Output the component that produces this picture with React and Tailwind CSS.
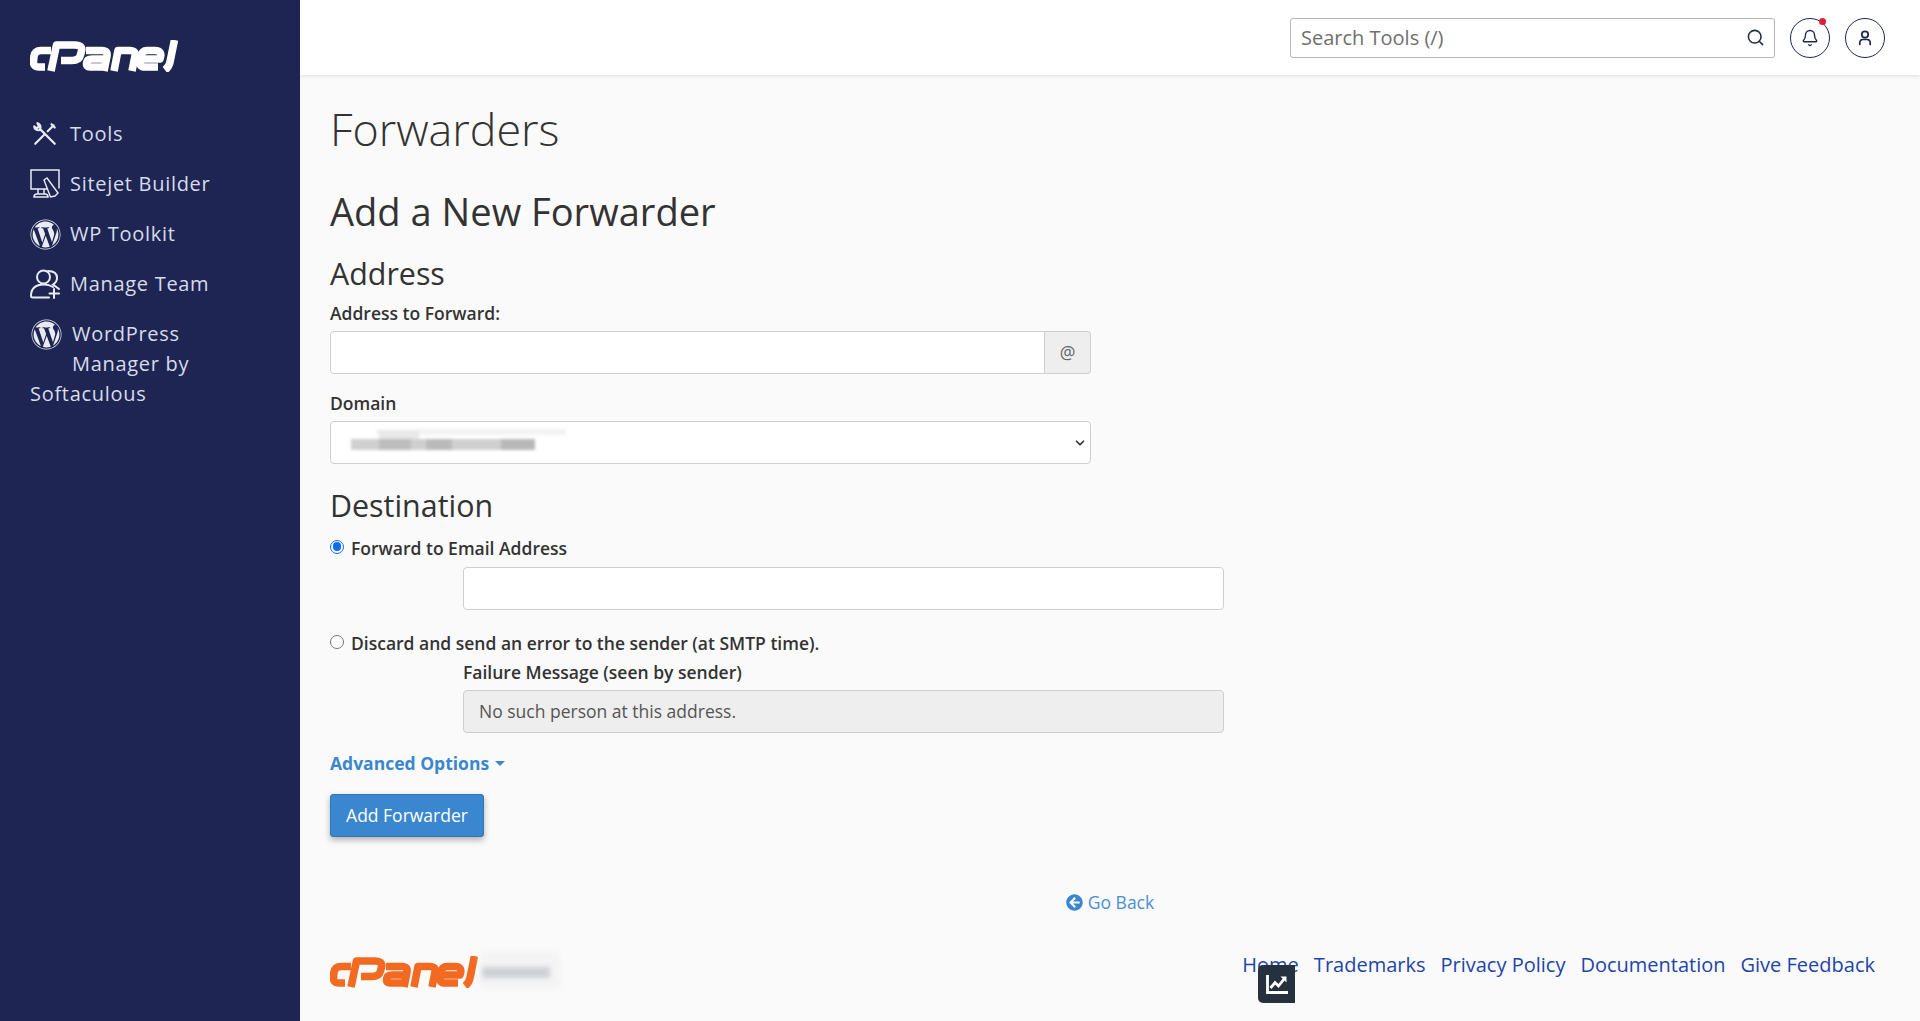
import React from "react";
import { Search, Bell, ChevronDown } from "lucide-react";
import { FaWordpress, FaArrowCircleLeft } from "react-icons/fa";

function Logo({ color, className }) {
  return (
    <svg viewBox="0 0 148 32" className={className} fill="none" stroke={color} strokeWidth="7.6" strokeLinecap="butt" strokeLinejoin="round">
      <path d="M21 10.5 H11 Q5 10.5 4 16 L3.5 21 Q3 27 9 27 H15" />
      <path d="M21 31 L26.5 5 H45 Q53 5 51.5 11 L50.5 15 Q49 20.5 42 20.5 H31" />
      <path d="M56 10.5 H72 Q78 10.5 77 16 L74 31 M76 19 H62 Q57 19 56.5 23 Q56 27 60 27 H74" />
      <path d="M84 31 L88 10.5 H100 Q106 10.5 105 16 L102 31" />
      <path d="M112 19 H130 Q133 10.5 125 10.5 H117 Q112 10.5 111 16 L110 21 Q109 27 115 27 H128" />
      <path d="M144.5 0 L140 22 Q139 27 135 30" />
    </svg>
  );
}

function ToolsIcon() {
  return (
    <svg viewBox="0 0 24 24" className="w-[26px] h-[26px] ml-[2px]" fill="none" stroke="#e8ebf3" strokeWidth="2" strokeLinecap="round" strokeLinejoin="round">
      <path d="M3 21 L11 13" />
      <path d="M14.5 9.5 L20 4 M18 3 L21 6" />
      <path d="M21 21 L7.5 7.5 Q8.5 4 6 2.5 L5 2 L6.5 5 L4.5 6.8 L2 5 Q2.5 8.5 6.5 8.5" />
    </svg>
  );
}

function SitejetIcon() {
  return (
    <svg viewBox="0 0 30 30" className="w-[30px] h-[30px]" fill="none" stroke="#e8ebf3" strokeWidth="1.5">
      <path d="M29 19.5 V1 H1 V20 H17" />
      <path d="M8 20 V25 M14 20 V25 M4 28 Q4 25 7 25 H15 Q18 25 18 28 Z" />
      <path d="M16 10 L19 8 L30 23 L27 26 L22.5 27 Z" strokeWidth="1.4" transform="translate(-2 1)" />
    </svg>
  );
}

function TeamIcon() {
  return (
    <svg viewBox="0 0 30 30" className="w-[30px] h-[30px]" fill="none" stroke="#e8ebf3" strokeWidth="2" strokeLinecap="round">
      <circle cx="13.5" cy="8" r="6.5" />
      <path d="M18 2 Q27 2 27 9 Q27 13 23 15.5 L29 20" />
      <path d="M23 18 Q19 15.5 14 15.5 Q1 15.5 1 27 Q1 28.5 3 28.5 H19" />
      <path d="M24 20 V29 M19.5 24.5 H29" />
    </svg>
  );
}

function NavItem({ icon, label }) {
  return (
    <div className="flex items-center h-[50px] pl-[30px]">
      <span className="w-[40px] flex items-center">{icon}</span>
      <span className="text-[20px] leading-[30px] tracking-[0.7px] text-[#d5dcea]">{label}</span>
    </div>
  );
}

function Input({ className = "", children }) {
  return <div className={"h-[43px] bg-white border border-[#cfcfcf] rounded-[4px] " + className}>{children}</div>;
}

export default function App() {
  return (
    <div className="flex w-full h-[1021px] overflow-hidden bg-[#fafafa] text-[#333] font-['Open_Sans',sans-serif]">
      <aside className="w-[300px] shrink-0 bg-[#1f2552]">
        <div className="pl-[30px] pt-[40px] h-[109px]">
          <Logo color="#ffffff" className="w-[148px] h-[32px]" />
        </div>
        <NavItem icon={<ToolsIcon />} label="Tools" />
        <NavItem icon={<SitejetIcon />} label="Sitejet Builder" />
        <NavItem icon={<FaWordpress className="w-[31px] h-[31px] text-[#e8ebf3]" />} label="WP Toolkit" />
        <NavItem icon={<TeamIcon />} label="Manage Team" />
        <div className="pl-[30px] pr-[30px] pt-[10px] text-[20px] leading-[30px] tracking-[0.7px] text-[#d5dcea]">
          <span className="float-left w-[42px] h-[50px] pl-[1px]">
            <FaWordpress className="w-[31px] h-[31px] text-[#e8ebf3]" />
          </span>
          WordPress Manager by Softaculous
        </div>
      </aside>

      <div className="flex-1 flex flex-col min-w-0">
        <header className="h-[75px] shrink-0 bg-white shadow-[0_1px_4px_rgba(0,0,0,0.12)] flex items-center justify-end pr-[35px] relative">
          <div className="w-[485px] h-[40px] border border-[#b5b5bd] rounded-[3px] flex items-center justify-between pl-[10px] pr-[9px] text-[20px] text-[#6f6f6f]">
            <span>Search Tools (/)</span>
            <Search className="w-[19px] h-[19px] text-[#1d3045]" strokeWidth={2} />
          </div>
          <div className="ml-[15px] w-[40px] h-[40px] rounded-full border border-[#1f2552] flex items-center justify-center relative">
            <Bell className="w-[18px] h-[18px] text-[#1f2552]" strokeWidth={1.8} />
            <span className="absolute top-[-1px] right-[3px] w-[7px] h-[7px] rounded-full bg-[#e0203a]" />
          </div>
          <div className="ml-[15px] w-[40px] h-[40px] rounded-full border border-[#1f2552] flex items-center justify-center">
            <svg viewBox="0 0 20 20" className="w-[20px] h-[20px]" fill="none" stroke="#1f2552" strokeWidth="1.7" strokeLinecap="round">
              <circle cx="10" cy="6.5" r="3.2" />
              <path d="M4.8 16.5 V15 Q4.8 11.5 8 11.5 H12 Q15.2 11.5 15.2 15 V16.5" />
            </svg>
          </div>
        </header>

        <main className="flex-1 pl-[30px] pr-[45px] relative">
          <h1 className="text-[44.8px] leading-[50px] font-light text-[#333] mt-[29px]">Forwarders</h1>
          <h2 className="text-[38.1px] leading-[50px] text-[#333] mt-[32px]">Add a New Forwarder</h2>
          <h3 className="text-[30.4px] leading-[40px] text-[#333] mt-[18px]">Address</h3>

          <div className="w-[761px]">
            <label className="block text-[17.5px] leading-[24px] font-semibold mt-[7px] mb-[6px]">Address to Forward:</label>
            <div className="flex">
              <Input className="flex-1 rounded-r-none" />
              <div className="w-[46px] h-[43px] bg-[#eeeeee] border border-l-0 border-[#cfcfcf] rounded-r-[4px] flex items-center justify-center text-[17.5px] text-[#666]">@</div>
            </div>
            <label className="block text-[17.5px] leading-[24px] font-semibold mt-[17px] mb-[6px]">Domain</label>
            <Input className="flex items-center justify-between pl-[20px] pr-[3px] relative">
              <div className="relative w-[215px] h-[30px] blur-[1.5px]">
                <div className="absolute left-[25px] top-[1px] w-[190px] h-[6px] bg-[#f3f3f3]" />
                <div className="absolute left-0 top-[11px] w-[184px] h-[11px] bg-[#d0d0d0]" />
                <div className="absolute left-[28px] top-[3px] w-[40px] h-[8px] bg-[#e8e8e8]" />
                <div className="absolute left-[28px] top-[11px] w-[32px] h-[11px] bg-[#bdbdbd]" />
                <div className="absolute left-[75px] top-[11px] w-[26px] h-[11px] bg-[#bababa]" />
                <div className="absolute left-[150px] top-[11px] w-[34px] h-[11px] bg-[#b8b8b8]" />
              </div>
              <ChevronDown className="w-[14px] h-[14px] text-[#333]" strokeWidth={3} />
            </Input>
          </div>

          <h3 className="text-[30.4px] leading-[40px] text-[#333] mt-[22px]">Destination</h3>
          <div className="flex items-center h-[24px] mt-[10px] text-[17.5px] font-semibold">
            <span className="w-[14px] h-[14px] rounded-full border-[1.5px] border-[#0b6cf0] bg-white flex items-center justify-center mr-[7px] -mt-[3px]">
              <span className="w-[8.5px] h-[8.5px] rounded-full bg-[#0b6cf0]" />
            </span>
            Forward to Email Address
          </div>
          <Input className="w-[761px] ml-[133px] mt-[7px]" />

          <div className="flex items-center h-[24px] mt-[21px] text-[17.5px] font-semibold">
            <span className="w-[14px] h-[14px] rounded-full border border-[#767676] bg-white mr-[7px] -mt-[3px]" />
            Discard and send an error to the sender (at SMTP time).
          </div>
          <div className="ml-[133px] text-[17.5px] leading-[24px] font-semibold mt-[5px] mb-[6px]">Failure Message (seen by sender)</div>
          <div className="w-[761px] h-[43px] ml-[133px] bg-[#eeeeee] border border-[#cfcfcf] rounded-[4px] flex items-center pl-[15px] text-[17.5px] text-[#555]">
            No such person at this address.
          </div>

          <div className="flex items-center mt-[18px] h-[24px] text-[17.5px] font-bold text-[#3a87d0]">
            Advanced Options
            <span className="ml-[6px] w-0 h-0 border-x-[5px] border-x-transparent border-t-[5px] border-t-[#3a87d0]" />
          </div>
          <div className="w-[154px] h-[43px] pb-[1px] mt-[19px] bg-[#3a87d0] border border-[#2f76ba] rounded-[3px] shadow-[0_3px_6px_rgba(0,0,0,0.3)] flex items-center justify-center text-[17.5px] text-white">
            Add Forwarder
          </div>

          <div className="flex items-center justify-center w-[1560px] mt-[53px] h-[24px] text-[17.5px] text-[#4b8fd3]">
            <FaArrowCircleLeft className="w-[17px] h-[17px] text-[#3a87d0] mr-[5px]" />
            Go Back
          </div>

          <div className="flex items-start justify-between mt-[37px]">
            <div className="flex items-start">
              <Logo color="#f26a21" className="w-[148px] h-[32px] mt-[5px]" />
              <div className="relative w-[85px] h-[42px] blur-[2.5px] ml-[2px]">
                <div className="absolute left-0 top-0 w-[80px] h-[38px] bg-[#f4f4f5]" />
                <div className="absolute left-[2px] top-[16px] w-[68px] h-[11px] bg-[#cdd0d5]" />
              </div>
            </div>
            <nav className="flex gap-[15px] text-[20px] leading-[28px] text-[#1e45a8]">
              <span>Home</span>
              <span>Trademarks</span>
              <span>Privacy Policy</span>
              <span>Documentation</span>
              <span>Give Feedback</span>
            </nav>
          </div>

          <div className="absolute left-[958px] top-[890px] w-[37px] h-[38px] bg-[#25313f] rounded-l-[5px] flex items-center justify-center">
            <svg viewBox="0 0 24 24" className="w-[24px] h-[24px]" fill="none" stroke="#fff" strokeWidth="2.8">
              <path d="M2.5 3 V20.5 H23" />
              <path d="M5.5 16 L10 10.5 L13.5 14 L19.5 6.5" />
              <path d="M15.5 4.5 H21.5 V10.5 Z" fill="#fff" stroke="none" />
            </svg>
          </div>
        </main>
      </div>
    </div>
  );
}
